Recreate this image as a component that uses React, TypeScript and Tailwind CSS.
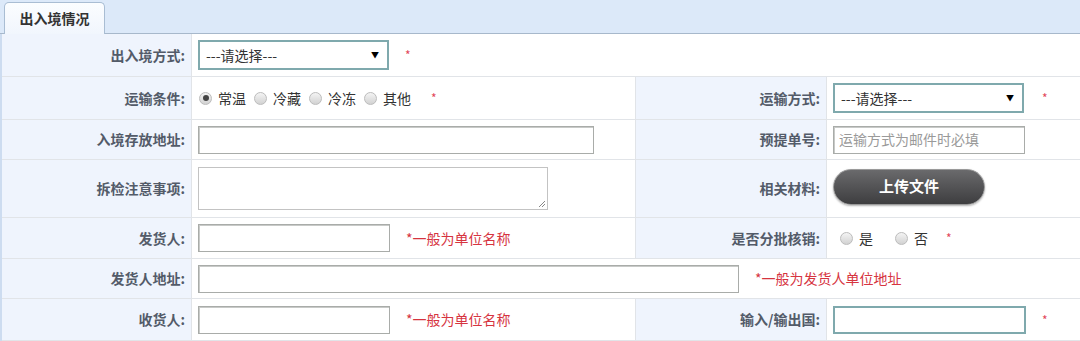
import React from 'react';

const font = { fontFamily: '"Microsoft YaHei", "Noto Sans CJK SC", "Liberation Sans", sans-serif' };

function Label({ text }: { text: string }) {
  return (
    <div className="flex items-center justify-end pr-[6px] bg-[#eff4fd] border-r border-[#dde6f2] text-[14px] font-bold text-[#535b69]">
      {text}
    </div>
  );
}

function Star({ className = '' }: { className?: string }) {
  return <span className={`text-[12px] leading-none text-[#e2475a] ${className}`}>*</span>;
}

function Radio({ checked, label }: { checked?: boolean; label: string }) {
  return (
    <span className="inline-flex items-center gap-[6px] text-[14px] text-[#333]">
      <span className="w-[13px] h-[13px] rounded-full border border-[#bcbcbc] bg-gradient-to-b from-[#f4f4f4] to-[#d2d2d2] flex items-center justify-center">
        {checked && <span className="w-[6px] h-[6px] rounded-full bg-[#444]" />}
      </span>
      {label}
    </span>
  );
}

function Select({ width }: { width: string }) {
  return (
    <div
      className={`${width} h-[30px] border-2 border-[#7fa9ad] bg-white flex items-center justify-between pl-[6px] pr-[8px] text-[14px] text-[#333]`}
    >
      <span>---请选择---</span>
      <span className="text-[8px] text-black">▼</span>
    </div>
  );
}

function Input({ width, placeholder, focus }: { width: string; placeholder?: string; focus?: boolean }) {
  return (
    <div
      className={`${width} h-[28px] bg-white flex items-center px-[5px] text-[14px] text-[#9a9a9a] ${
        focus ? 'border-2 border-[#7fa9ad]' : 'border border-[#a9aca9] shadow-[inset_1px_1px_0_#c8cac8]'
      }`}
    >
      {placeholder}
    </div>
  );
}

function Hint({ text }: { text: string }) {
  return <span className="text-[14px] text-[#d6343f]">{text}</span>;
}

export default function App() {
  return (
    <div className="w-[1080px] h-[341px] overflow-hidden bg-white" style={font}>
      <div className="h-[34px] bg-[#dce9f9] border-b border-[#a7b8cb] flex items-end pl-[4px]">
        <div className="w-[101px] h-[32px] -mb-px rounded-t-[5px] border border-b-0 border-[#a9bdd3] bg-gradient-to-b from-[#fbfdff] to-[#f1f6fd] flex items-center justify-center text-[14px] font-bold text-[#333]">
          出入境情况
        </div>
      </div>

      <div className="grid grid-cols-[190px_444px_191px_1fr] grid-rows-[43px_43px_40px_58px_41px_40px_42px] border-l-2 border-[#cddcf0] [&>*]:border-b [&>*]:border-[#e1e4e8]">
        <Label text="出入境方式:" />
        <div className="col-span-3 flex items-center pl-[6px] gap-[16px]">
          <Select width="w-[191px]" />
          <Star />
        </div>

        <Label text="运输条件:" />
        <div className="flex items-center pl-[7px] gap-[8px] border-r border-[#dde6f2]">
          <Radio checked label="常温" />
          <Radio label="冷藏" />
          <Radio label="冷冻" />
          <Radio label="其他" />
          <Star className="ml-[12px]" />
        </div>
        <Label text="运输方式:" />
        <div className="flex items-center pl-[6px] gap-[18px]">
          <Select width="w-[191px]" />
          <Star />
        </div>

        <Label text="入境存放地址:" />
        <div className="flex items-center pl-[6px] border-r border-[#dde6f2]">
          <Input width="w-[396px]" />
        </div>
        <Label text="预提单号:" />
        <div className="flex items-center pl-[6px]">
          <Input width="w-[192px]" placeholder="运输方式为邮件时必填" />
        </div>

        <Label text="拆检注意事项:" />
        <div className="flex items-center pl-[6px] border-r border-[#dde6f2]">
          <div className="relative w-[350px] h-[43px] border border-[#c3c3c3] bg-white">
            <svg className="absolute right-[1px] bottom-[1px]" width="8" height="8" viewBox="0 0 8 8">
              <path d="M7 1 L1 7 M7 4 L4 7" stroke="#888" strokeWidth="1" />
            </svg>
          </div>
        </div>
        <Label text="相关材料:" />
        <div className="flex items-center pl-[6px] pb-[4px]">
          <div className="w-[152px] h-[36px] rounded-full border border-[#9a9a9a] bg-gradient-to-b from-[#6a6a6c] to-[#3e3e40] shadow-[0_1px_2px_rgba(0,0,0,0.3)] flex items-center justify-center text-[15px] font-bold text-white">
            上传文件
          </div>
        </div>

        <Label text="发货人:" />
        <div className="flex items-center pl-[6px] gap-[16px] border-r border-[#dde6f2]">
          <Input width="w-[192px]" />
          <Hint text="*一般为单位名称" />
        </div>
        <Label text="是否分批核销:" />
        <div className="flex items-center pl-[13px]">
          <Radio label="是" />
          <span className="ml-[22px]">
            <Radio label="否" />
          </span>
          <Star className="ml-[18px]" />
        </div>

        <Label text="发货人地址:" />
        <div className="col-span-3 flex items-center pl-[6px] gap-[16px]">
          <Input width="w-[541px]" />
          <Hint text="*一般为发货人单位地址" />
        </div>

        <Label text="收货人:" />
        <div className="flex items-center pl-[6px] gap-[16px] border-r border-[#dde6f2]">
          <Input width="w-[192px]" />
          <Hint text="*一般为单位名称" />
        </div>
        <Label text="输入/输出国:" />
        <div className="flex items-center pl-[6px] gap-[16px]">
          <Input width="w-[193px]" focus />
          <Star />
        </div>
      </div>
    </div>
  );
}
